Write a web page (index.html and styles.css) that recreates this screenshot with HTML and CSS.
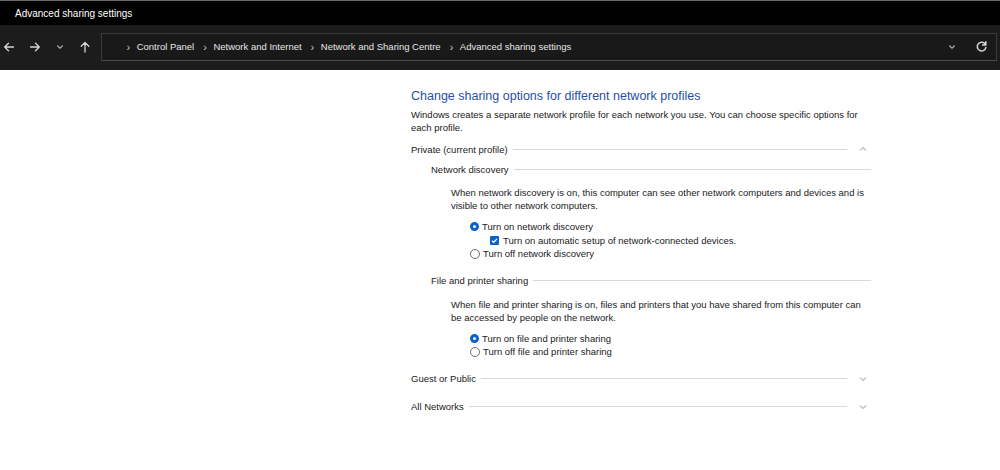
FILE: index.html
```html
<!DOCTYPE html>
<html lang="en">
<head>
    <meta charset="UTF-8">
    <title>Advanced sharing settings</title>
    <link rel="stylesheet" href="styles.css">
</head>
<body>
    <div class="title-bar">Advanced sharing settings</div>

    <div class="toolbar">
        <div class="nav-buttons">
            <!-- back / forward / recent / up -->
            <svg class="nav-icon" viewBox="0 0 12 12"><path d="M10.5 6H1.8M5.5 2.2L1.7 6l3.8 3.8" /></svg>
            <svg class="nav-icon" viewBox="0 0 12 12"><path d="M1.5 6h8.7M6.5 2.2L10.3 6 6.5 9.8" /></svg>
            <svg class="nav-icon small" viewBox="0 0 12 12"><path d="M3 4.5L6 7.5 9 4.5" /></svg>
            <svg class="nav-icon" viewBox="0 0 12 12"><path d="M6 11V1.5M2.2 5.3L6 1.5l3.8 3.8" /></svg>
        </div>
        <div class="address-box">
            <div class="breadcrumb">
                <span class="sep">›</span>
                <span>Control Panel</span>
                <span class="sep">›</span>
                <span>Network and Internet</span>
                <span class="sep">›</span>
                <span>Network and Sharing Centre</span>
                <span class="sep">›</span>
                <span>Advanced sharing settings</span>
            </div>
            <svg class="nav-icon small" viewBox="0 0 12 12"><path d="M3 4.5L6 7.5 9 4.5" /></svg>
            <svg class="nav-icon refresh" viewBox="0 0 12 12"><path d="M9.6 4.2A4 4 0 1 0 10 7M10 1.6v3H7" /></svg>
        </div>
    </div>

    <div class="content">
        <h1>Change sharing options for different network profiles</h1>
        <p class="intro">Windows creates a separate network profile for each network you use. You can choose specific options for each profile.</p>

        <div class="profile-head">
            <span>Private (current profile)</span>
            <span class="rule"></span>
            <svg class="chevron" viewBox="0 0 10 10"><path d="M2 6.5L5 3.5 8 6.5" /></svg>
        </div>

        <div class="group">
            <div class="group-head">
                <span>Network discovery</span>
                <span class="rule"></span>
            </div>
            <div class="group-body">
                <p>When network discovery is on, this computer can see other network computers and devices and is visible to other network computers.</p>
                <div class="options">
                    <div class="option"><span class="radio checked"></span>Turn on network discovery</div>
                    <div class="option sub"><span class="checkbox"><svg viewBox="0 0 10 10"><path d="M2.3 5.2L4.2 7 7.8 3.2" /></svg></span>Turn on automatic setup of network-connected devices.</div>
                    <div class="option"><span class="radio"></span>Turn off network discovery</div>
                </div>
            </div>
        </div>

        <div class="group">
            <div class="group-head">
                <span>File and printer sharing</span>
                <span class="rule"></span>
            </div>
            <div class="group-body">
                <p>When file and printer sharing is on, files and printers that you have shared from this computer can be accessed by people on the network.</p>
                <div class="options">
                    <div class="option"><span class="radio checked"></span>Turn on file and printer sharing</div>
                    <div class="option"><span class="radio"></span>Turn off file and printer sharing</div>
                </div>
            </div>
        </div>

        <div class="profile-head collapsed">
            <span>Guest or Public</span>
            <span class="rule"></span>
            <svg class="chevron" viewBox="0 0 10 10"><path d="M2 3.5L5 6.5 8 3.5" /></svg>
        </div>

        <div class="profile-head collapsed">
            <span>All Networks</span>
            <span class="rule"></span>
            <svg class="chevron" viewBox="0 0 10 10"><path d="M2 3.5L5 6.5 8 3.5" /></svg>
        </div>
    </div>
</body>
</html>
```

FILE: styles.css
```css
body {
    margin: 0;
    font-family: "Liberation Sans", Arial, sans-serif;
    font-size: 9.5px;
    color: #1a1a1a;
    background-color: #ffffff;
    height: 470px;
    overflow: hidden;
}

.title-bar {
    height: 24px;
    line-height: 25px;
    padding-left: 15px;
    background-color: #000000;
    border-top: 1px solid #6a6a6a;
    color: #ffffff;
    font-size: 10px;
}

.toolbar {
    display: flex;
    align-items: center;
    height: 43px;
    padding-bottom: 2px;
    background-color: #1c1c1c;
}

.nav-buttons {
    display: flex;
    align-items: center;
    gap: 14px;
    width: 101px;
    padding-left: 3px;
    box-sizing: border-box;
}

.nav-icon {
    width: 12px;
    height: 12px;
    fill: none;
    stroke: #d6d6d6;
    stroke-width: 1.3;
    stroke-linecap: round;
    stroke-linejoin: round;
}

.nav-icon.small {
    width: 10px;
    height: 10px;
    stroke: #a8a8a8;
}

.address-box {
    flex: 1;
    display: flex;
    align-items: center;
    gap: 18px;
    height: 26px;
    margin-right: 3px;
    padding: 0 8px 0 22px;
    background-color: #191919;
    border: 1px solid #3a3a3a;
    border-bottom-color: #4a4a4a;
}

.breadcrumb {
    flex: 1;
    display: flex;
    align-items: center;
    gap: 6.5px;
    color: #e6e6e6;
}

.breadcrumb .sep {
    color: #c8c8c8;
    font-size: 11px;
    margin-left: 2.5px;
}

.nav-icon.refresh {
    width: 13px;
    height: 13px;
    stroke-width: 1.4;
}

.content {
    width: 460px;
    margin-left: 411px;
    padding-top: 19px;
}

h1 {
    margin: 0;
    font-size: 12.5px;
    font-weight: normal;
    color: #1f4fa6;
}

p {
    margin: 0;
    line-height: 13px;
}

.intro {
    margin-top: 5px;
}

.profile-head,
.group-head {
    display: flex;
    align-items: center;
    gap: 5px;
    height: 14px;
}

.profile-head {
    margin-top: 8px;
}

.profile-head.collapsed {
    margin-top: 13px;
}

.profile-head.collapsed + .profile-head.collapsed {
    margin-top: 14px;
}

.rule {
    flex: 1;
    height: 1px;
    background-color: #d9d9d9;
}

.chevron {
    width: 10px;
    height: 10px;
    margin-left: 6px;
    margin-right: 3px;
    fill: none;
    stroke: #8a8a8a;
    stroke-width: 1;
}

.group {
    padding-left: 20px;
}

.group-head {
    margin-top: 6px;
}

.group + .group .group-head {
    margin-top: 13px;
}

.group-body {
    padding-left: 20px;
    padding-top: 10px;
}

.options {
    margin-top: 8px;
    padding-left: 19px;
}

.option {
    display: flex;
    align-items: center;
    gap: 3px;
    height: 13.5px;
}

.option.sub {
    padding-left: 20px;
}

.radio {
    width: 8px;
    height: 8px;
    border: 1px solid #6e6e6e;
    border-radius: 50%;
    box-sizing: content-box;
}

.radio.checked {
    width: 3px;
    height: 3px;
    border: 3.5px solid #0a63c4;
}

.checkbox {
    display: flex;
    width: 9px;
    height: 9px;
    background-color: #0a63c4;
    border-radius: 1px;
    margin-right: 1px;
}

.checkbox svg {
    width: 9px;
    height: 9px;
    fill: none;
    stroke: #ffffff;
    stroke-width: 1.4;
}
```
